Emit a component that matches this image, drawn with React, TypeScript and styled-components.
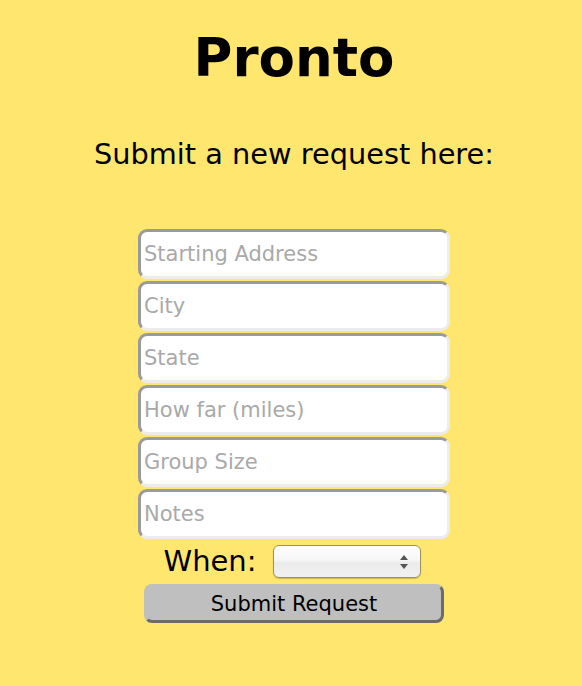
import styled, { createGlobalStyle } from 'styled-components';

const GlobalStyle = createGlobalStyle`
  html, body {
    margin: 0;
    padding: 0;
    background: #ffe66f;
  }
  body {
    font-family: "DejaVu Sans", Verdana, sans-serif;
  }
`;

const Page = styled.div`
  box-sizing: border-box;
  width: 582px;
  min-height: 686px;
  padding-left: 6px;
  display: flex;
  flex-direction: column;
  align-items: center;
  background: #ffe66f;
`;

const Title = styled.h1`
  margin: 24px 0 0;
  font-size: 53px;
  font-weight: 700;
  line-height: 68px;
  color: #000;
`;

const Subtitle = styled.h2`
  margin: 44px 0 0;
  font-size: 28.8px;
  font-weight: 400;
  line-height: 36px;
  color: #000;
`;

const Form = styled.form`
  margin-top: 57px;
  display: flex;
  flex-direction: column;
  align-items: center;
  gap: 2px;
`;

const Field = styled.input`
  box-sizing: border-box;
  width: 312px;
  height: 50px;
  padding: 0 3px;
  border: 3px solid;
  border-color: #9b9b9b #ececec #ececec #9b9b9b;
  border-radius: 9px;
  background: #fff;
  font-family: "DejaVu Sans", Verdana, sans-serif;
  font-size: 21px;
  color: #333;
  outline: none;

  &::placeholder {
    color: #a9a9a9;
  }
`;

const WhenRow = styled.div`
  display: flex;
  align-items: center;
  gap: 16px;
  margin-top: 3px;
  margin-left: -4px;
`;

const WhenLabel = styled.label`
  font-size: 29px;
  line-height: 34px;
  color: #000;
`;

const SelectBox = styled.div`
  position: relative;
  width: 148px;
  height: 33px;
`;

const Select = styled.select`
  box-sizing: border-box;
  width: 100%;
  height: 100%;
  appearance: none;
  border: 1px solid #9d915a;
  border-radius: 6px;
  background: linear-gradient(#ffffff 0%, #f6f6f6 45%, #ebebeb 55%, #f1f1f1 100%);
  box-shadow: 0 1px 1px rgba(120, 100, 30, 0.35);
  outline: none;
`;

const Arrows = styled.svg`
  position: absolute;
  right: 12px;
  top: 9px;
  pointer-events: none;
`;

const SubmitButton = styled.button`
  box-sizing: border-box;
  width: 300px;
  height: 39px;
  margin-top: 4px;
  border: 3px solid;
  border-color: #bfbfbf #6b6b6b #6b6b6b #bfbfbf;
  border-radius: 8px;
  background: #bfbfbf;
  font-family: "DejaVu Sans", Verdana, sans-serif;
  font-size: 21px;
  color: #000;
  padding: 0;
`;

const placeholders = [
  'Starting Address',
  'City',
  'State',
  'How far (miles)',
  'Group Size',
  'Notes',
];

export default function App() {
  return (
    <Page>
      <GlobalStyle />
      <Title>Pronto</Title>
      <Subtitle>Submit a new request here:</Subtitle>
      <Form onSubmit={(e) => e.preventDefault()}>
        {placeholders.map((p) => (
          <Field key={p} type="text" placeholder={p} />
        ))}
        <WhenRow>
          <WhenLabel>When:</WhenLabel>
          <SelectBox>
            <Select defaultValue="">
              <option value=""></option>
            </Select>
            <Arrows width="10" height="16" viewBox="0 0 10 16">
              <path d="M5 1 L9 6 L1 6 Z" fill="#555" />
              <path d="M5 15 L9 10 L1 10 Z" fill="#555" />
            </Arrows>
          </SelectBox>
        </WhenRow>
        <SubmitButton type="submit">Submit Request</SubmitButton>
      </Form>
    </Page>
  );
}
